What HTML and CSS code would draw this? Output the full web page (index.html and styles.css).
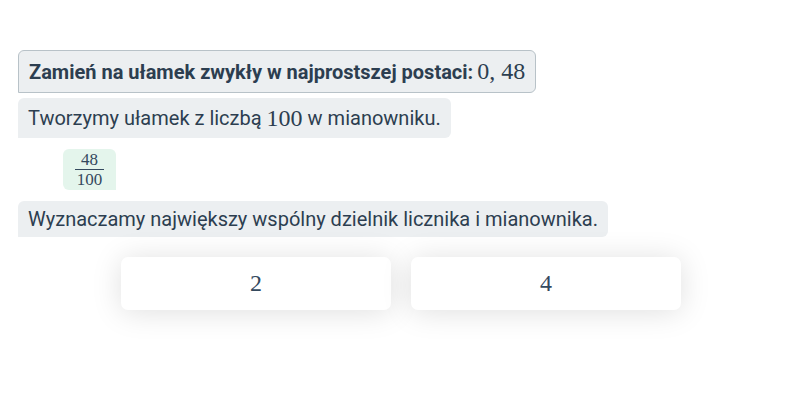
FILE: index.html
```html
<!DOCTYPE html>
<html lang="pl">
<head>
<meta charset="utf-8">
<link rel="stylesheet" href="styles.css">
</head>
<body>
<div class="page">
  <div class="bubble bubble-title"><b>Zamień na ułamek zwykły w najprostszej postaci:</b> <span class="math">0, 48</span></div>
  <div class="bubble bubble-step">Tworzymy ułamek z liczbą <span class="math">100</span> w mianowniku.</div>
  <div class="answer">
    <span class="frac"><span class="num">48</span><span class="den">100</span></span>
  </div>
  <div class="bubble bubble-plain">Wyznaczamy największy wspólny dzielnik licznika i mianownika.</div>
  <div class="choices">
    <button class="choice"><span class="math">2</span></button>
    <button class="choice"><span class="math">4</span></button>
  </div>
</div>
</body>
</html>
```

FILE: styles.css
```css
* { box-sizing: border-box; }
html, body { margin: 0; padding: 0; background: #ffffff; }
body {
  font-family: Roboto, "Liberation Sans", sans-serif;
  color: #2c3e50;
  width: 800px;
  height: 400px;
  overflow: hidden;
}
.page {
  padding: 50px 0 0 18px;
  display: flex;
  flex-direction: column;
  align-items: flex-start;
}
.bubble {
  background: #eceff1;
  border-radius: 6px 6px 6px 0;
  font-size: 20px;
  padding: 0 10px;
  display: flex;
  align-items: center;
  white-space: nowrap;
}
.bubble b { font-weight: 700; margin-right: 4px; }
.bubble-title {
  border: 1px solid #b8c2c8;
  height: 43px;
}
.bubble-step {
  margin-top: 5px;
  height: 40px;
}
.bubble-plain {
  margin-top: 11px;
  height: 36px;
}
.math {
  font-family: "Liberation Serif", "DejaVu Serif", serif;
  font-size: 24px;
  margin: 0 5px;
}
.bubble-title .math { margin: 0; }
.answer {
  margin: 11px 0 0 45px;
  width: 53px;
  height: 41px;
  background: #e4f5ec;
  border-radius: 6px 6px 0 6px;
  display: flex;
  align-items: center;
  justify-content: center;
}
.frac {
  display: inline-flex;
  flex-direction: column;
  align-items: center;
  font-family: "Liberation Serif", "DejaVu Serif", serif;
  font-size: 17px;
  line-height: 15px;
  color: #34495e;
}
.frac .num { padding: 0 2px 2px; border-bottom: 1px solid #34495e; width: 100%; text-align: center; }
.frac .den { padding: 2px 2px 0; }
.choices {
  margin: 20px 0 0 103px;
  display: flex;
  gap: 20px;
}
.choice {
  width: 270px;
  height: 53px;
  border: none;
  background: #ffffff;
  border-radius: 7px;
  box-shadow: 0 2px 30px rgba(0, 0, 0, 0.13);
  display: flex;
  align-items: center;
  justify-content: center;
  color: #34495e;
  padding: 0;
}
.choice .math { font-size: 24px; margin: 0; }
```
